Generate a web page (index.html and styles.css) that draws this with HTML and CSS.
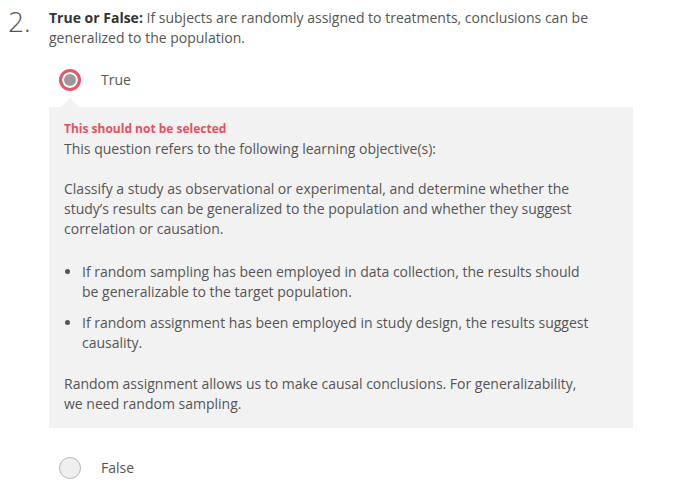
FILE: index.html
```html
<!DOCTYPE html>
<html>
<head>
<meta charset="utf-8">
<link rel="stylesheet" href="styles.css">
</head>
<body>
<div class="question">
  <div class="num">2.</div>
  <div class="content">
    <p class="prompt"><strong>True or False:</strong> If subjects are randomly assigned to treatments, conclusions can be generalized to the population.</p>
    <div class="option">
      <span class="radio radio-wrong"></span>
      <span class="label">True</span>
    </div>
    <div class="feedback">
      <div class="wrong">This should not be selected</div>
      <p>This question refers to the following learning objective(s):</p>
      <p>Classify a study as observational or experimental, and determine whether the study’s results can be generalized to the population and whether they suggest correlation or causation.</p>
      <ul>
        <li>If random sampling has been employed in data collection, the results should be generalizable to the target population.</li>
        <li>If random assignment has been employed in study design, the results suggest causality.</li>
      </ul>
      <p>Random assignment allows us to make causal conclusions. For generalizability, we need random sampling.</p>
    </div>
    <div class="option option-last">
      <span class="radio"></span>
      <span class="label">False</span>
    </div>
  </div>
</div>
</body>
</html>
```
FILE: styles.css
```css
html, body {
  margin: 0;
  padding: 0;
  background: #fff;
}
body {
  font-family: "Open Sans", "Liberation Sans", sans-serif;
  font-size: 14px;
  line-height: 20px;
  color: #555;
}
.question {
  display: flex;
  padding: 8px 0 0 8px;
}
.num {
  width: 41px;
  flex: none;
  font-size: 28px;
  font-weight: 300;
  line-height: 26px;
  color: #555;
}
.content {
  width: 584px;
}
.prompt {
  margin: 0;
}
.prompt strong {
  font-weight: 700;
  color: #333;
}
.option {
  display: flex;
  align-items: center;
  height: 40px;
  margin-top: 12px;
  padding-left: 10px;
}
.option-last {
  margin-top: 20px;
}
.radio {
  box-sizing: border-box;
  width: 22px;
  height: 22px;
  border-radius: 50%;
  border: 1px solid #b5b5b5;
  background: #efefef;
  flex: none;
}
.radio-wrong {
  border: 3px solid #e8566a;
  background: #9a9a9a;
  box-shadow: inset 0 0 0 2px #fff;
}
.label {
  margin-left: 20px;
  color: #555;
}
.feedback {
  position: relative;
  margin-top: 7px;
  background: #f2f2f2;
  padding: 12px 38px 14px 15px;
}
.feedback::before {
  content: "";
  position: absolute;
  left: 12px;
  top: -9px;
  border-left: 9px solid transparent;
  border-right: 9px solid transparent;
  border-bottom: 9px solid #f2f2f2;
}
.wrong {
  color: #e5505f;
  font-weight: 700;
  font-size: 12px;
}
.feedback p {
  margin: 0 0 20px;
}
.feedback p:nth-of-type(2) {
  margin-bottom: 23px;
}
.feedback p:last-child {
  margin-bottom: 0;
}
.feedback ul {
  margin: 0 0 21px;
  padding-left: 18px;
}
.feedback li + li {
  margin-top: 11px;
}
```
